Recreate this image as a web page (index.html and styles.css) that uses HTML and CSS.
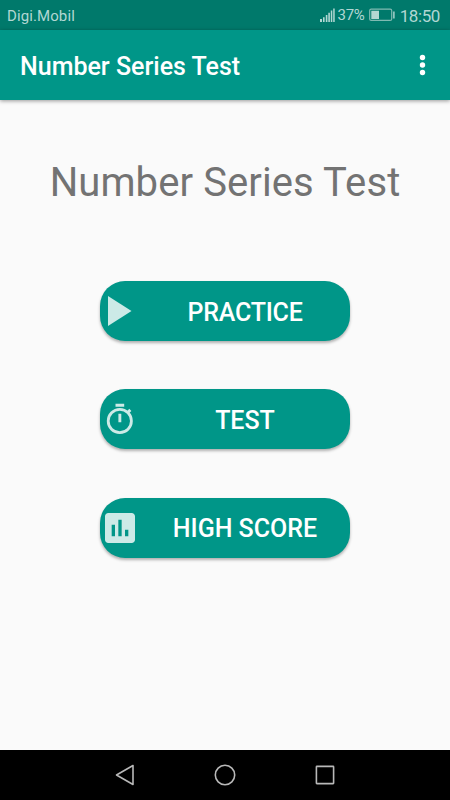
FILE: index.html
```
<!DOCTYPE html>
<html lang="en">
<head>
    <meta charset="UTF-8">
    <meta name="viewport" content="width=device-width, initial-scale=1.0">
    <title>Number Series Test</title>
    <link rel="stylesheet" href="styles.css">
</head>
<body>
<div class="status-bar">
    <span class="carrier">Digi.Mobil</span>
    <svg class="signal" width="16" height="14" viewBox="0 0 16 14">
        <path d="M1 11h2v3h-2zM4 9.3h1.6v4.7h-1.6zM6.8 7h1.6v7h-1.6zM9.3 4.8h1.6v9.2h-1.6zM11.8 2.5h1.5v11.5h-1.5zM14.2 0.5h1.5v13.5h-1.5z"/>
    </svg>
    <span class="percent">37%</span>
    <svg class="battery" width="27" height="14" viewBox="0 0 27 14">
        <rect x="0.7" y="1.2" width="22" height="11.2" rx="1.5" fill="none" stroke="#80bab2" stroke-width="1.2"/>
        <path d="M2.3 2.8h7.7v8.2h-7.7zM24.2 3.5h1.4v7h-1.4z"/>
    </svg>
    <span class="clock">18:50</span>
</div>

<header class="app-bar">
    <div class="app-title">Number Series Test</div>
    <button class="menu-button" aria-label="More options">
        <svg width="8" height="24" viewBox="0 0 8 24">
            <circle cx="3.5" cy="4.5" r="2.7"/>
            <circle cx="3.5" cy="12" r="2.7"/>
            <circle cx="3.5" cy="19.5" r="2.7"/>
        </svg>
    </button>
</header>

<main class="container">
    <h1>Number Series Test</h1>
    <div class="menu">
        <button class="menu-item">
            <svg width="40" height="40" viewBox="0 0 40 40">
                <path d="M8 5v30l23.5-15z"/>
            </svg>
            <span class="practice">PRACTICE</span>
        </button>
        <button class="menu-item">
            <svg width="40" height="40" viewBox="0 0 40 40">
                <circle cx="19.8" cy="22" r="11.6" fill="none" stroke="#cceae7" stroke-width="2.8"/>
                <path d="M15.5 4.8h8.7v2.9h-8.7zM18.4 14.7h2.9v8.6h-2.9zM26.7 12.4l2.6-2.6 2.1 2.1-2.6 2.6z"/>
            </svg>
            <span>TEST</span>
        </button>
        <button class="menu-item">
            <svg width="40" height="40" viewBox="0 0 24 24">
                <path d="M19 3H5c-1.1 0-2 .9-2 2v14c0 1.1.9 2 2 2h14c1.1 0 2-.9 2-2V5c0-1.1-.9-2-2-2zM9 17H7v-7h2v7zm4 0h-2V7h2v10zm4 0h-2v-4h2v4z"/>
            </svg>
            <span>HIGH SCORE</span>
        </button>
    </div>
</main>

<nav class="nav-bar">
    <svg width="24" height="24" viewBox="0 0 24 24">
        <path d="M3.5 12L20 2.5v19z"/>
    </svg>
    <svg width="24" height="24" viewBox="0 0 24 24">
        <circle cx="12" cy="12" r="9.7"/>
    </svg>
    <svg width="24" height="24" viewBox="0 0 24 24">
        <rect x="3.4" y="3.4" width="17.2" height="17.2" rx="0.5"/>
    </svg>
</nav>
</body>
</html>
```
FILE: styles.css
```
body {
    font-family: Roboto, sans-serif;
    display: flex;
    flex-direction: column;
    height: 100vh;
    margin: 0;
    background-color: #fafafa;
}
button {
    font-family: inherit;
    border: none;
    padding: 0;
}
.status-bar {
    display: flex;
    align-items: center;
    height: 30px;
    padding: 0 10px 0 7px;
    box-sizing: border-box;
    background-color: #00796b;
    color: #b2d7d3;
    fill: #b2d7d3;
}
.carrier {
    flex: 1;
    font-size: 15px;
    letter-spacing: 0.1px;
    padding-top: 2px;
}
.percent {
    font-size: 15px;
    letter-spacing: -0.2px;
    margin: 0 4px 0 2px;
}
.clock {
    font-size: 17px;
    letter-spacing: -0.4px;
    margin-left: 4px;
    padding-top: 1px;
}
.app-bar {
    display: flex;
    align-items: center;
    justify-content: space-between;
    height: 70px;
    padding: 0 23px 0 20px;
    box-sizing: border-box;
    background-color: #009688;
    color: white;
    box-shadow: 0 1px 4px rgba(0, 0, 0, 0.4);
}
.app-title {
    font-size: 25px;
    font-weight: 500;
    padding-top: 2px;
}
.menu-button {
    display: flex;
    background: none;
    fill: white;
}
.container {
    flex: 1;
    display: flex;
    flex-direction: column;
    align-items: center;
}
h1 {
    margin: 59px 0 74px;
    font-size: 40px;
    font-weight: 400;
    letter-spacing: 0.1px;
    line-height: 48px;
    color: #737373;
}
.menu {
    display: flex;
    flex-direction: column;
    gap: 48px;
}
.menu-item {
    display: flex;
    align-items: center;
    width: 250px;
    height: 60px;
    border-radius: 25px;
    background-color: #009688;
    color: white;
    fill: #cceae7;
    font-size: 25px;
    font-weight: 500;
    box-shadow: 0 2px 3px rgba(0, 0, 0, 0.3);
}
.menu-item:last-child {
    margin-top: 0.5px;
}
.menu-item span {
    flex: 1;
    padding-top: 2px;
}
.menu-item .practice {
    letter-spacing: -0.2px;
}
.nav-bar {
    display: flex;
    align-items: center;
    justify-content: center;
    gap: 76px;
    height: 50px;
    background-color: black;
    fill: none;
    stroke: #b8b8b8;
    stroke-width: 1.6;
    stroke-linejoin: round;
}
```
